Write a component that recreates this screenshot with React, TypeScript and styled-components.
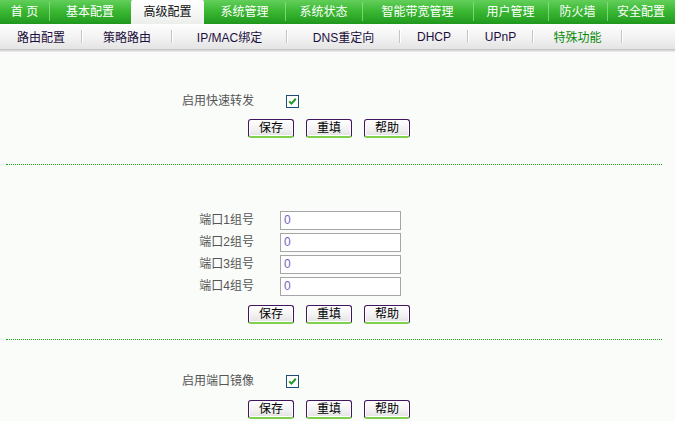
import styled, { createGlobalStyle } from "styled-components";

const GlobalStyle = createGlobalStyle`
  html, body {
    margin: 0;
    padding: 0;
    background: #fafcfa;
  }
  body {
    font-family: "Liberation Sans", "Noto Sans CJK SC", sans-serif;
    font-size: 12px;
  }
`;

const mainTabs = [
  { label: "首 页", width: 49 },
  { label: "基本配置", width: 82 },
  { label: "高级配置", width: 73, active: true },
  { label: "系统管理", width: 81 },
  { label: "系统状态", width: 77 },
  { label: "智能带宽管理", width: 111 },
  { label: "用户管理", width: 75 },
  { label: "防火墙", width: 59 },
  { label: "安全配置", width: 68 },
];

const subTabs = [
  { label: "路由配置", width: 82 },
  { label: "策略路由", width: 90 },
  { label: "IP/MAC绑定", width: 115 },
  { label: "DNS重定向", width: 113 },
  { label: "DHCP", width: 68 },
  { label: "UPnP", width: 65 },
  { label: "特殊功能", width: 89, active: true },
];

export default function App() {
  return (
    <>
      <GlobalStyle />
      <Page>
        <TopNav>
          {mainTabs.map((t) => (
            <Tab key={t.label} $width={t.width} $active={!!t.active}>
              {t.label}
            </Tab>
          ))}
        </TopNav>
        <SubNav>
          {subTabs.map((t) => (
            <SubTab key={t.label} $width={t.width} $active={!!t.active}>
              {t.label}
            </SubTab>
          ))}
        </SubNav>

        <Section $top={42} $bottom={26}>
          <FormGrid $row={20}>
            <Label>启用快速转发</Label>
            <Check />
          </FormGrid>
          <ButtonRow $gap={8} />
        </Section>
        <Divider />

        <Section $top={44} $bottom={15}>
          <FormGrid $row={22}>
            {[1, 2, 3, 4].map((n) => (
              <Field key={n}>
                <Label>端口{n}组号</Label>
                <Input defaultValue="0" />
              </Field>
            ))}
          </FormGrid>
          <ButtonRow $gap={8} />
        </Section>
        <Divider />

        <Section $top={31} $bottom={3}>
          <FormGrid $row={20}>
            <Label>启用端口镜像</Label>
            <Check />
          </FormGrid>
          <ButtonRow $gap={9} />
        </Section>
      </Page>
    </>
  );
}

function Check() {
  return (
    <CheckBox>
      <svg width="11" height="11" viewBox="0 0 11 11">
        <path
          d="M2.2 5.4 L4.4 7.6 L8.8 2.8"
          fill="none"
          stroke="#1f9a1f"
          strokeWidth="2"
        />
      </svg>
    </CheckBox>
  );
}

function ButtonRow({ $gap }: { $gap: number }) {
  return (
    <Buttons $gap={$gap}>
      <Button>保存</Button>
      <Button>重填</Button>
      <Button>帮助</Button>
    </Buttons>
  );
}

const Page = styled.div`
  width: 675px;
  min-height: 421px;
  overflow: hidden;
`;

const TopNav = styled.nav`
  display: flex;
  height: 24px;
  background: linear-gradient(#63cf5b, #3cb834 45%, #2aa526 80%, #1f961d);
`;

const Tab = styled.div<{ $width: number; $active: boolean }>`
  position: relative;
  flex: 0 0 ${(p) => p.$width}px;
  display: flex;
  align-items: center;
  justify-content: center;
  line-height: 24px;
  font-size: 12px;
  color: ${(p) => (p.$active ? "#111" : "#fff")};
  background: ${(p) =>
    p.$active ? "linear-gradient(#ffffff, #f4f6f4 60%, #eceeec)" : "none"};
  border-radius: ${(p) => (p.$active ? "2px 2px 0 0" : "0")};

  &::after {
    content: "";
    position: absolute;
    right: -1px;
    top: 2px;
    bottom: 3px;
    width: 1px;
    background: ${(p) => (p.$active ? "transparent" : "rgba(150, 230, 140, 0.7)")};
  }
`;

const SubNav = styled.nav`
  display: flex;
  height: 25px;
  background: linear-gradient(#fefefe, #f3f3f3 50%, #e4e4e4);
  box-shadow: 0 1px 0 #c6c6c6, 0 2px 1px #d8d8d8, 0 3px 1px #ececec;
`;

const SubTab = styled.div<{ $width: number; $active: boolean }>`
  position: relative;
  flex: 0 0 ${(p) => p.$width}px;
  display: flex;
  align-items: center;
  justify-content: center;
  font-size: 12px;
  color: ${(p) => (p.$active ? "#0a8a0a" : "#1c0e3c")};

  &::after {
    content: "";
    position: absolute;
    right: 0;
    top: 6px;
    height: 13px;
    width: 1px;
    background: #c4c4c4;
    box-shadow: 1px 0 0 #ffffff;
  }
`;

const Section = styled.section<{ $top: number; $bottom: number }>`
  padding: ${(p) => p.$top}px 0 ${(p) => p.$bottom}px;
`;

const FormGrid = styled.div<{ $row: number }>`
  display: grid;
  grid-template-columns: 254px 148px;
  column-gap: 26px;
  grid-auto-rows: ${(p) => p.$row}px;
  align-items: center;
`;

const Field = styled.div`
  display: contents;
`;

const Label = styled.span`
  justify-self: end;
  font-size: 12px;
  line-height: 14px;
  color: #555;
  white-space: nowrap;
`;

const CheckBox = styled.span`
  display: flex;
  align-items: center;
  justify-content: center;
  margin-left: 6px;
  width: 11px;
  height: 11px;
  border: 1px solid #1c4f7c;
  background: #fff;
`;

const Input = styled.input`
  box-sizing: border-box;
  width: 121px;
  height: 19px;
  margin: 0;
  padding: 0 3px;
  border: 1px solid #a6a6a6;
  background: #fff;
  font-family: "Liberation Sans", sans-serif;
  font-size: 12px;
  color: #7462c4;
  outline: none;
`;

const Buttons = styled.div<{ $gap: number }>`
  display: flex;
  gap: 12px;
  margin: ${(p) => p.$gap}px 0 0 248px;
`;

const Button = styled.button`
  box-sizing: border-box;
  width: 46px;
  height: 19px;
  padding: 0 0 1px;
  border: 1px solid #42155f;
  border-bottom: 2px solid #7fd04d;
  border-radius: 3px;
  background: linear-gradient(#ffffff, #f1f1f1 60%, #e2e2e2);
  font-family: "Liberation Sans", "Noto Sans CJK SC", sans-serif;
  font-size: 12px;
  line-height: 14px;
  color: #000;
  box-shadow: inset 0 0 0 1px #fff;
`;

const Divider = styled.hr`
  margin: 0 13px 0 6px;
  height: 0;
  border: none;
  border-top: 1px dotted #1aa81a;
`;
